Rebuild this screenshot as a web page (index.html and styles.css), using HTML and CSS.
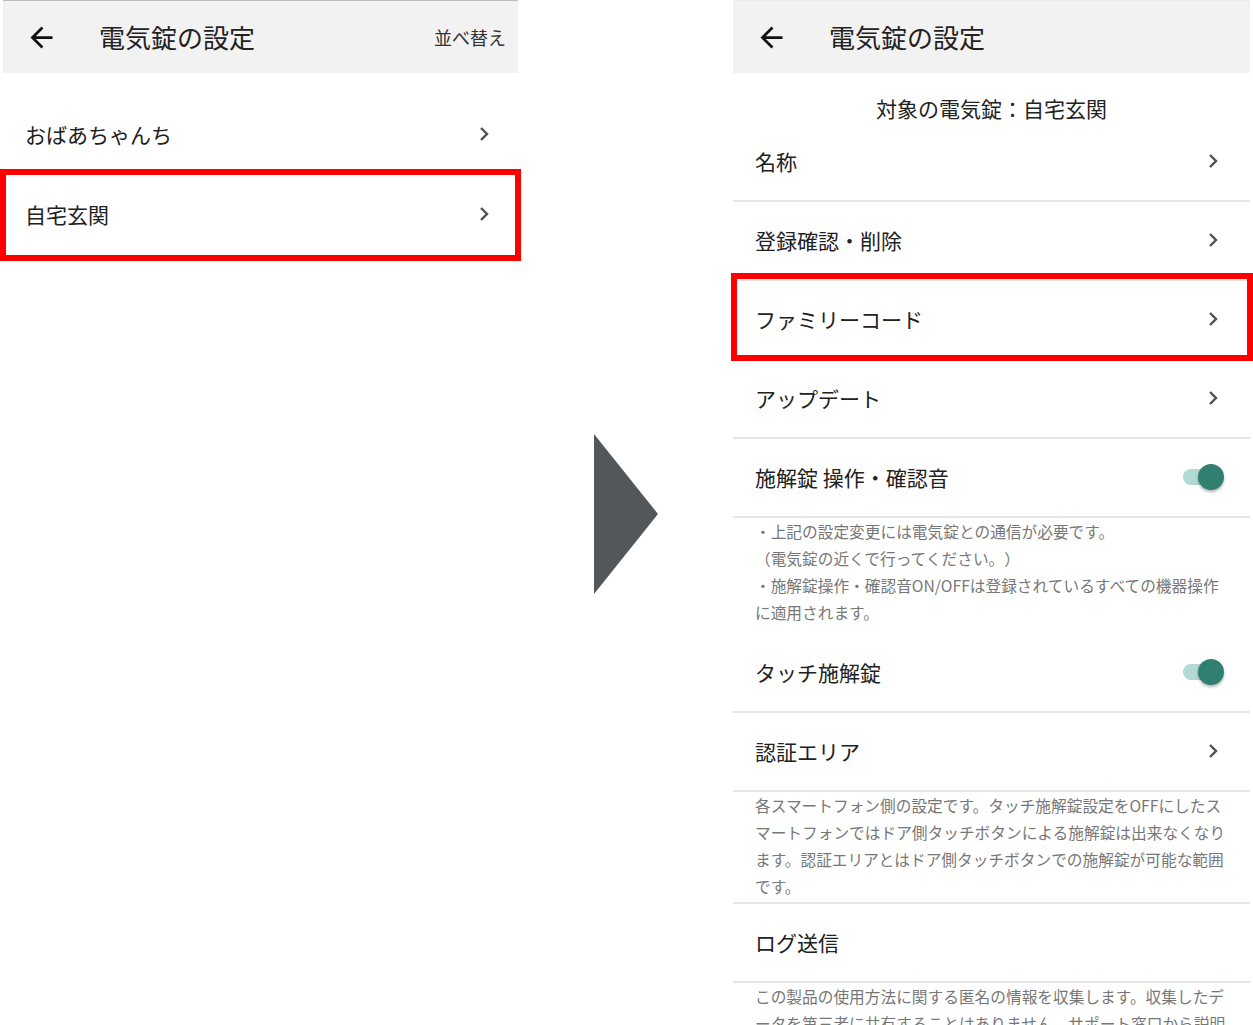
FILE: index.html
```html
<!DOCTYPE html>
<html lang="ja">

<head>
    <meta charset="UTF-8">
    <meta name="viewport" content="width=device-width, initial-scale=1.0">
    <title>電気錠の設定</title>
    <link rel="stylesheet" href="styles.css">
</head>

<body>
    <div class="page">
        <!-- 左の画面：電気錠一覧 -->
        <div class="phone phone-left">
            <div class="header header-dark">
                <svg class="back" viewBox="0 0 24 24"><path d="M20 11H7.83l5.59-5.59L12 4l-8 8 8 8 1.41-1.41L7.83 13H20v-2z"/></svg>
                <span class="title">電気錠の設定</span>
                <span class="sort">並べ替え</span>
            </div>
            <div class="lock-list">
                <div class="lock-row">
                    <span>おばあちゃんち</span>
                    <svg class="chevron" viewBox="0 0 10 16"><polyline points="2,2 8,8 2,14"/></svg>
                </div>
                <div class="lock-row">
                    <span>自宅玄関</span>
                    <svg class="chevron" viewBox="0 0 10 16"><polyline points="2,2 8,8 2,14"/></svg>
                    <div class="mark mark-left"></div>
                </div>
            </div>
        </div>

        <div class="step">
            <svg class="step-arrow" viewBox="0 0 64 160"><polygon points="0,0 64,80 0,160"/></svg>
        </div>

        <!-- 右の画面：設定 -->
        <div class="phone phone-right">
            <div class="header">
                <svg class="back" viewBox="0 0 24 24"><path d="M20 11H7.83l5.59-5.59L12 4l-8 8 8 8 1.41-1.41L7.83 13H20v-2z"/></svg>
                <span class="title">電気錠の設定</span>
            </div>
            <div class="target">対象の電気錠：自宅玄関</div>

            <div class="row">
                <span>名称</span>
                <svg class="chevron" viewBox="0 0 10 16"><polyline points="2,2 8,8 2,14"/></svg>
            </div>
            <div class="row">
                <span>登録確認・削除</span>
                <svg class="chevron" viewBox="0 0 10 16"><polyline points="2,2 8,8 2,14"/></svg>
            </div>
            <div class="row">
                <span>ファミリーコード</span>
                <svg class="chevron" viewBox="0 0 10 16"><polyline points="2,2 8,8 2,14"/></svg>
                <div class="mark mark-right"></div>
            </div>
            <div class="row">
                <span>アップデート</span>
                <svg class="chevron" viewBox="0 0 10 16"><polyline points="2,2 8,8 2,14"/></svg>
            </div>
            <div class="row">
                <span>施解錠 操作・確認音</span>
                <div class="switch"><div class="track"></div><div class="thumb"></div></div>
            </div>
            <p class="note">
                ・上記の設定変更には電気錠との通信が必要です。<br>
                （電気錠の近くで行ってください。）<br>
                ・施解錠操作・確認音ON/OFFは登録されているすべての機器操作<br>
                に適用されます。
            </p>
            <div class="row">
                <span>タッチ施解錠</span>
                <div class="switch"><div class="track"></div><div class="thumb"></div></div>
            </div>
            <div class="row">
                <span>認証エリア</span>
                <svg class="chevron" viewBox="0 0 10 16"><polyline points="2,2 8,8 2,14"/></svg>
            </div>
            <p class="note note-tight">
                各スマートフォン側の設定です。タッチ施解錠設定をOFFにしたス<br>
                マートフォンではドア側タッチボタンによる施解錠は出来なくなり<br>
                ます。認証エリアとはドア側タッチボタンでの施解錠が可能な範囲<br>
                です。
            </p>
            <div class="row">
                <span>ログ送信</span>
            </div>
            <p class="note">
                この製品の使用方法に関する匿名の情報を収集します。収集したデ<br>
                ータを第三者に共有することはありません。サポート窓口から説明<br>
                を求められた場合に送信してください。
            </p>
        </div>
    </div>
</body>

</html>
```

FILE: styles.css
```css
body {
    margin: 0;
    background-color: #ffffff;
    font-family: "Noto Sans CJK JP", "Noto Sans", sans-serif;
    color: #212121;
    overflow: hidden;
    height: 1025px;
    text-spacing-trim: space-all;
}

.page {
    display: flex;
    align-items: flex-start;
}

.phone {
    background-color: #ffffff;
}

.phone-left {
    width: 515px;
    margin-left: 3px;
}

.phone-right {
    width: 517px;
}

.header {
    height: 72px;
    display: flex;
    align-items: center;
    background-color: #f2f2f2;
    border-top: 1px solid #ebebeb;
    padding-left: 22px;
    padding-right: 11px;
}

.header-dark {
    border-top-color: #bdbdbd;
}

.back {
    width: 33px;
    height: 33px;
    fill: #111111;
    flex-shrink: 0;
}

.title {
    margin-left: 41px;
    font-size: 26px;
    line-height: 34px;
    color: #222222;
}

.sort {
    margin-left: auto;
    margin-right: 1px;
    font-size: 18px;
    color: #333333;
}

.chevron {
    width: 10px;
    height: 16px;
    fill: none;
    stroke: #505050;
    stroke-width: 2.4;
    flex-shrink: 0;
}

/* 左の一覧 */
.lock-list {
    padding-top: 21px;
}

.lock-row {
    height: 80px;
    display: flex;
    align-items: center;
    justify-content: space-between;
    padding: 0 29px 0 22px;
    font-size: 21px;
    position: relative;
}

/* 赤い囲み */
.mark {
    position: absolute;
    border: 6px solid #ff0000;
    pointer-events: none;
}

.mark-left {
    top: -5px;
    bottom: -7px;
    left: -3px;
    right: -3px;
}

.mark-right {
    top: -8px;
    bottom: -3px;
    left: -2px;
    right: -3px;
}

/* 真ん中の矢印 */
.step {
    width: 215px;
    flex-shrink: 0;
    padding-top: 434px;
    padding-left: 76px;
    box-sizing: border-box;
}

.step-arrow {
    display: block;
    width: 64px;
    height: 160px;
    fill: #53575a;
}

/* 右の設定 */
.target {
    padding-top: 21px;
    height: 29px;
    line-height: 28px;
    font-size: 21px;
    text-align: center;
    color: #222222;
}

.row {
    height: 79px;
    box-sizing: border-box;
    border-bottom: 2px solid #e6e6e6;
    display: flex;
    align-items: center;
    justify-content: space-between;
    padding: 0 32px 2px 22px;
    font-size: 21px;
    position: relative;
}

.switch {
    position: relative;
    width: 41px;
    height: 26px;
    margin-right: -6px;
}

.track {
    position: absolute;
    left: 0;
    top: 5px;
    width: 37px;
    height: 16px;
    border-radius: 8px;
    background-color: #b2d9d3;
}

.thumb {
    position: absolute;
    right: 0;
    top: 0;
    width: 26px;
    height: 26px;
    border-radius: 50%;
    background-color: #317f70;
    box-shadow: 0 2px 3px rgba(0, 0, 0, 0.3);
}

.note {
    margin: 0;
    padding: 0 10px 8px 22px;
    font-size: 15.7px;
    line-height: 27px;
    color: #777777;
    white-space: nowrap;
}

.note-tight {
    padding-bottom: 2px;
    border-bottom: 2px solid #e6e6e6;
}
```
